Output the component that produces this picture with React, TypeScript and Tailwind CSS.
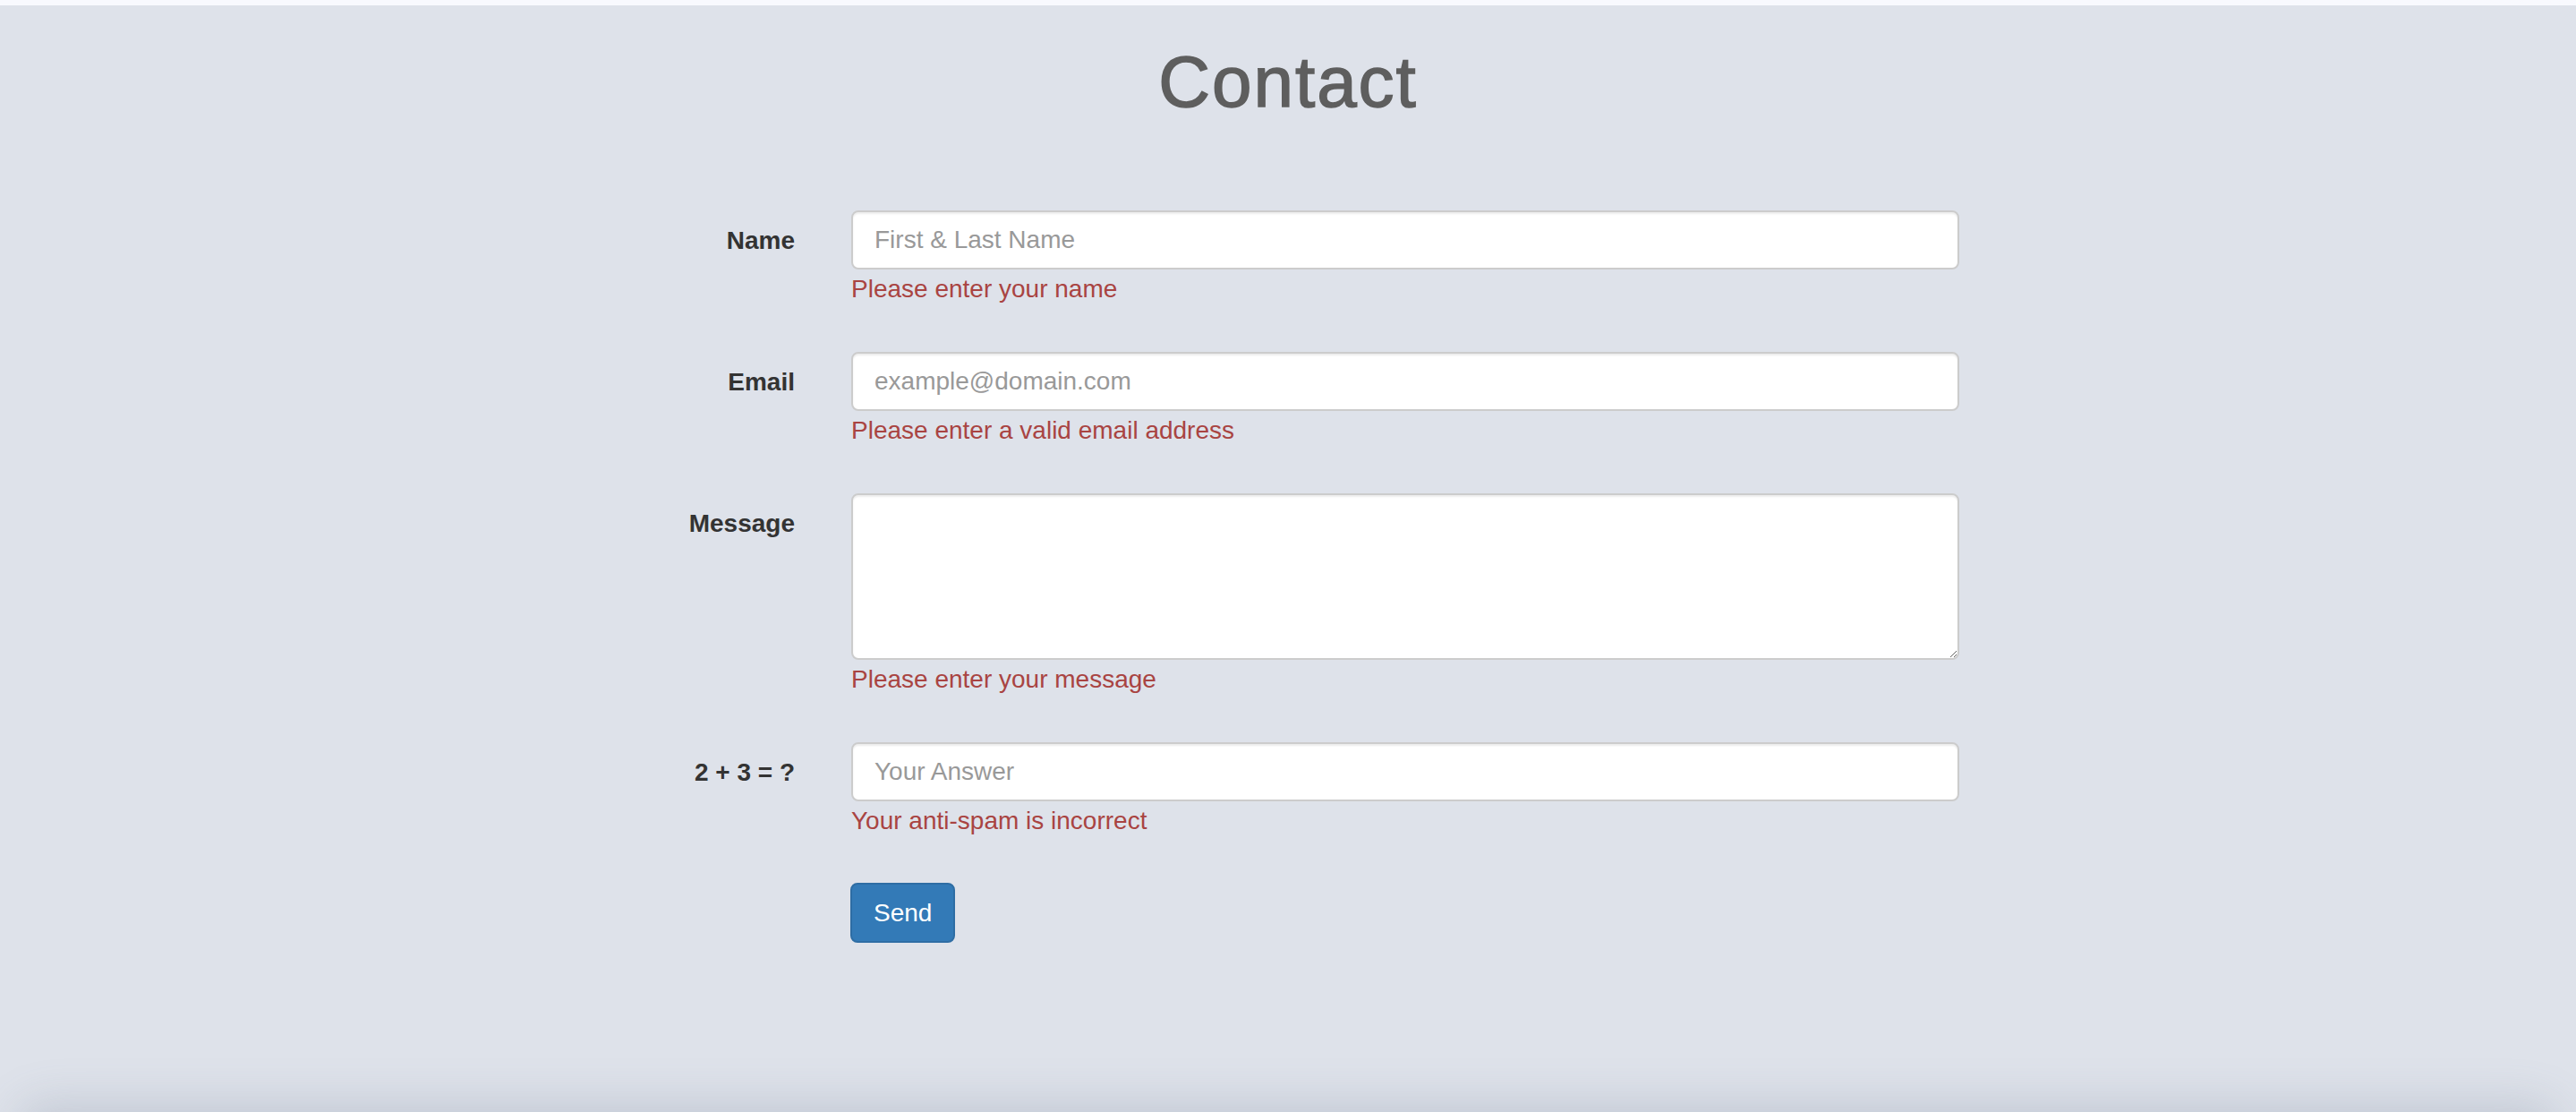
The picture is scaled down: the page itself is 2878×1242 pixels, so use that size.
import React from "react";

const font = { fontFamily: '"Liberation Sans", Arial, Helvetica, sans-serif' };

function Field({
  label,
  error,
  children,
  last,
}: {
  label: string;
  error: string;
  children: React.ReactNode;
  last?: boolean;
}) {
  return (
    <div className={`grid grid-cols-[236px_1238px] gap-x-[63px] ${last ? "mb-[49px]" : "mb-[50px]"}`}>
      <label className="text-right font-bold text-[28px] leading-[40px] pt-[14px] text-[#333333]">{label}</label>
      <div>
        {children}
        <div className="mt-[2px] text-[28px] leading-[40px] text-[#a94442]">{error}</div>
      </div>
    </div>
  );
}

const inputCls =
  "block w-full h-[66px] px-[24px] text-[28px] text-[#555] bg-white border-2 border-[#cccccc] rounded-[8px] shadow-[inset_0_2px_2px_rgba(0,0,0,0.075)] placeholder:text-[#999999] outline-none";

export default function App() {
  return (
    <div className="h-[1242px] overflow-hidden flex flex-col bg-[#dee2ea]" style={font}>
      <div className="h-[6px] bg-[#f8f9fe] shrink-0" />
      <h1 className="mt-[42px] text-center text-[80px] leading-[88px] tracking-[2px] text-[#5e5e5e] font-normal [-webkit-text-stroke:1.5px_#5e5e5e]">
        Contact
      </h1>
      <form className="mx-auto w-[1574px] mt-[99px]" onSubmit={(e) => e.preventDefault()}>
        <Field label="Name" error="Please enter your name">
          <input className={inputCls} placeholder="First & Last Name" />
        </Field>
        <Field label="Email" error="Please enter a valid email address">
          <input className={inputCls} placeholder="example@domain.com" />
        </Field>
        <Field label="Message" error="Please enter your message">
          <textarea
            className="block w-full h-[186px] px-[24px] py-[12px] text-[28px] leading-[40px] text-[#555] bg-white border-2 border-[#cccccc] rounded-[8px] shadow-[inset_0_2px_2px_rgba(0,0,0,0.075)] outline-none"
          />
        </Field>
        <Field label="2 + 3 = ?" error="Your anti-spam is incorrect" last>
          <input className={inputCls} placeholder="Your Answer" />
        </Field>
        <div className="grid grid-cols-[236px_1238px] gap-x-[63px]">
          <div />
          <div className="-ml-[1px]">
            <button
              type="submit"
              className="h-[67px] px-[24px] text-[28px] leading-[40px] text-white bg-[#337ab7] border-2 border-[#2e6da4] rounded-[8px]"
            >
              Send
            </button>
          </div>
        </div>
      </form>
      <div className="flex-1" />
      <div className="h-[70px] overflow-hidden shrink-0">
        <div className="mt-[70px] mx-[30px] h-[100px] rounded-[20px] bg-[#dee2ea] shadow-[0_0_50px_10px_rgba(100,112,135,0.22)]" />
      </div>
    </div>
  );
}
